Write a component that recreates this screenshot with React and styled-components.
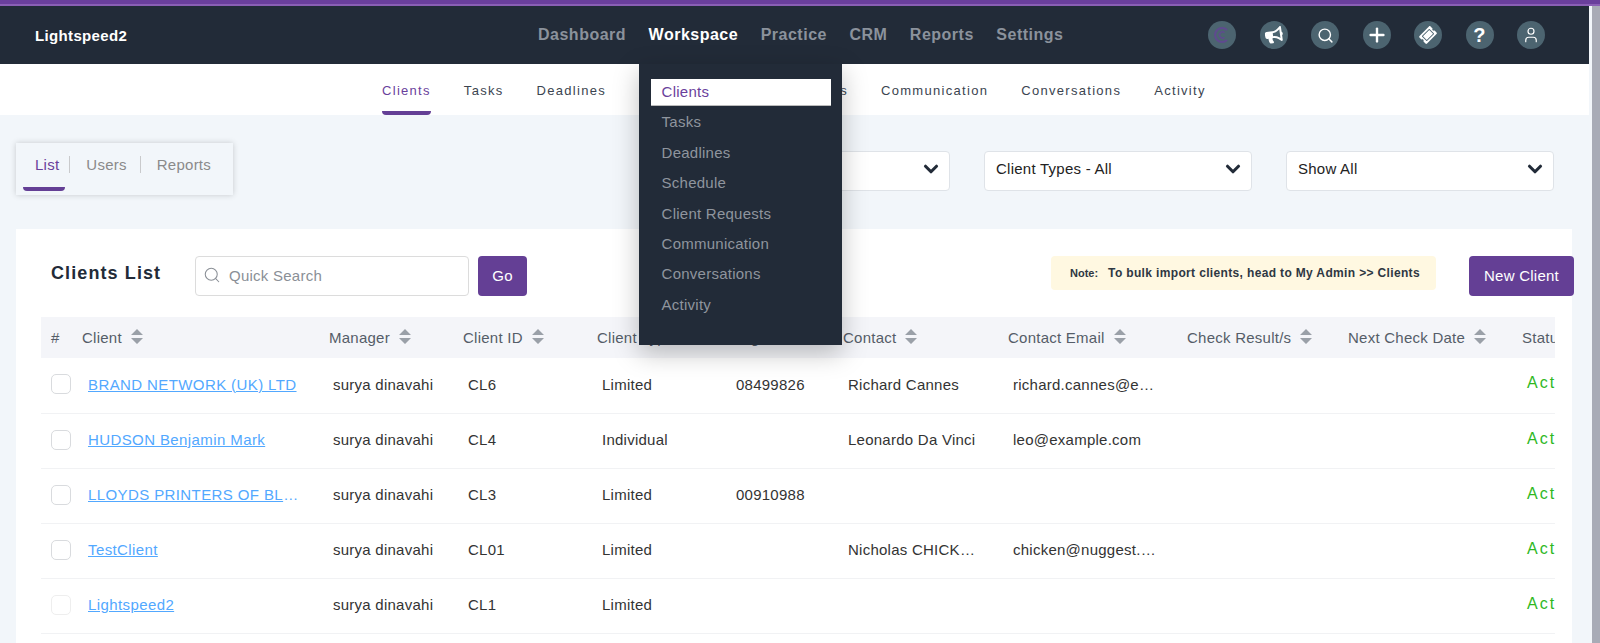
import React from 'react';
import styled, { createGlobalStyle } from 'styled-components';
import { Search, Plus, User, ChevronDown } from 'lucide-react';
import { FaBullhorn, FaTicketAlt } from 'react-icons/fa';

const GlobalStyle = createGlobalStyle`
    html, body {
        margin: 0;
        height: 643px;
        overflow: hidden;
        background: #f2f6fa;
        font-family: "Liberation Sans", Arial, sans-serif;
        letter-spacing: 0.25px;
    }
    * { box-sizing: border-box; }
`;

const Shell = styled.div`
    display: flex;
    height: 637px;
`;

const Page = styled.div`
    width: 1592px;
    flex-shrink: 0;
`;

const Scrollbar = styled.div`
    flex: 1;
    background: #a8abb6;
`;

const TopStripe = styled.div`
    height: 6px;
    width: 1600px;
    background: #6a3f9c;
    border-bottom: 2px solid #8a5fb5;
`;

const Navbar = styled.header`
    display: flex;
    align-items: center;
    height: 58px;
    margin-right: 3px;
    background: #222b38;
    padding-left: 35px;
`;

const Logo = styled.div`
    width: 503px;
    color: #fff;
    font-size: 15px;
    font-weight: 700;
    letter-spacing: 0.35px;
`;

const MainNav = styled.nav`
    display: flex;
    gap: 22.5px;
    height: 100%;
    width: 668px;
`;

const MainNavItem = styled.div`
    position: relative;
    display: flex;
    align-items: center;
    font-size: 16px;
    font-weight: 700;
    letter-spacing: 0.5px;
    color: ${p => (p.$active ? '#fff' : '#8b929c')};
`;

const Dropdown = styled.div`
    position: absolute;
    z-index: 10;
    top: 58px;
    left: -10px;
    width: 203px;
    height: 281px;
    padding: 15px 11px 0 12px;
    background: #222b38;
    box-shadow: 0 8px 24px rgba(0, 0, 0, 0.25);
    font-weight: 400;
    font-size: 15px;
    letter-spacing: 0.25px;
`;

const DropdownItem = styled.div`
    height: 26.5px;
    margin-bottom: 3.9px;
    padding-left: 11px;
    line-height: 25px;
    color: ${p => (p.$active ? '#6a3f9c' : '#8f959e')};
    background: ${p => (p.$active ? '#fff' : 'transparent')};
    border-bottom: ${p => (p.$active ? '1px solid #bbb' : 'none')};
`;

const IconRow = styled.div`
    display: flex;
    gap: 23.5px;
    margin-left: 2px;
`;

const IconCircle = styled.div`
    width: 28px;
    height: 28px;
    border-radius: 50%;
    background: #4c6470;
    color: #fff;
    display: flex;
    align-items: center;
    justify-content: center;
    font-size: 20px;
    font-weight: 700;
`;

const SubNav = styled.div`
    display: flex;
    gap: 33px;
    height: 51px;
    margin-right: 3px;
    padding-left: 382px;
    background: #fff;
`;

const SubNavItem = styled.div`
    position: relative;
    display: flex;
    align-items: center;
    padding-top: 2px;
    font-size: 13px;
    letter-spacing: 1.3px;
    color: ${p => (p.$active ? '#6a3f9c' : '#3b4450')};

    &::after {
        content: '';
        display: ${p => (p.$active ? 'block' : 'none')};
        position: absolute;
        left: 0;
        right: 0;
        bottom: 0;
        height: 4px;
        border-radius: 0 0 4px 4px;
        background: #643f95;
    }
`;

const FilterBar = styled.div`
    display: flex;
    align-items: flex-start;
    height: 114px;
    padding: 28px 38px 0 16px;
`;

const TabCard = styled.div`
    display: flex;
    height: 52px;
    width: 217px;
    padding: 13px 0 0 19px;
    background: #f2f6fa;
    box-shadow: 0 0 6px rgba(0, 0, 0, 0.18);
    margin-right: auto;
`;

const Tab = styled.div`
    position: relative;
    height: 17px;
    padding-right: ${p => (p.$active ? '10px' : '13px')};
    margin-right: 16px;
    font-size: 15px;
    line-height: 17px;
    color: ${p => (p.$active ? '#6a3f9c' : '#8a8a8a')};
    border-right: ${p => (p.$last ? 'none' : '1px solid #c9cacc')};

    &::after {
        content: '';
        display: ${p => (p.$active ? 'block' : 'none')};
        position: absolute;
        left: -12px;
        width: 42px;
        top: 31px;
        height: 4px;
        border-radius: 0 0 4px 4px;
        background: #643f95;
    }
`;

const Select = styled.div`
    display: flex;
    align-items: center;
    justify-content: space-between;
    width: 268px;
    height: 40px;
    margin: 8px 0 0 34px;
    padding: 0 7px 5px 11px;
    background: #fff;
    border: 1px solid #dfe3e8;
    border-radius: 4px;
    font-size: 15px;
    color: #222;
`;

const Card = styled.section`
    margin: 0 20px 0 16px;
    height: 420px;
    padding: 27px 0 0 25px;
    background: #fff;
`;

const CardHeader = styled.div`
    display: flex;
    align-items: flex-start;
    height: 61px;
`;

const Title = styled.h2`
    margin: 7px 34px 0 10px;
    width: 110px;
    font-size: 18px;
    font-weight: 700;
    letter-spacing: 1.1px;
    color: #222b38;
    white-space: nowrap;
`;

const SearchBox = styled.div`
    display: flex;
    align-items: center;
    gap: 8px;
    width: 274px;
    height: 40px;
    padding: 0 0 2px 7px;
    border: 1px solid #dcdcdc;
    border-radius: 4px;
    font-size: 15px;
    color: #8a8f96;
`;

const Button = styled.button`
    height: 40px;
    width: ${p => (p.$wide ? '105px' : '49px')};
    padding: 0 0 2px;
    margin-left: ${p => (p.$wide ? '33px' : '9px')};
    margin-right: ${p => (p.$wide ? '-2px' : '0')};
    background: #643f95;
    color: #fff;
    border: none;
    border-radius: 4px;
    font: 400 15px "Liberation Sans", Arial, sans-serif;
    letter-spacing: 0.25px;
    white-space: nowrap;
`;

const Note = styled.div`
    display: flex;
    align-items: center;
    gap: 10px;
    height: 34px;
    margin-left: auto;
    padding: 0 16px 0 19px;
    background: #fff8e1;
    border-radius: 4px;
    font-size: 12px;
    font-weight: 700;
    letter-spacing: 0.35px;
    color: #2e3742;
`;

const NoteLabel = styled.span`
    font-size: 11px;
    letter-spacing: 0;
`;

const TableClip = styled.div`
    width: 1514px;
    overflow: hidden;
`;

const Table = styled.table`
    table-layout: fixed;
    border-collapse: collapse;
    width: 1671px;
    font-size: 15px;
`;

const HeadRow = styled.tr`
    height: 41px;
    background: #f4f5f9;
`;

const Th = styled.th`
    padding: 0 0 0 10px;
    font-weight: 400;
    text-align: left;
    color: #555d68;
    white-space: nowrap;
`;

const Td = styled.td`
    height: 55px;
    padding: 0 18px 2px 15px;
    color: #333;
    border-bottom: 1px solid #f1f2f4;
    white-space: nowrap;
    overflow: hidden;
    text-overflow: ellipsis;
`;

const ManagerCell = styled(Td)`
    padding: 0 0 2px 14px;
`;

const CheckCell = styled.td`
    padding: 0 0 2px 10px;
    border-bottom: 1px solid #f1f2f4;
`;

const Check = styled.div`
    width: 20px;
    height: 20px;
    border: 1px solid ${p => (p.$faint ? '#eeeeee' : '#d9dbde')};
    border-radius: 5px;
`;

const ClientCell = styled(Td)`
    padding: 0 18px 2px 16px;
    letter-spacing: 0.4px;
    color: #52a8ff;
`;

const ClientLink = styled.a`
    color: #52a8ff;
    text-decoration: underline;
`;

const StatusCell = styled(Td)`
    padding-bottom: 4px;
    font-size: 16px;
    color: #2fb81f;
    letter-spacing: 2px;
    overflow: visible;
    text-overflow: clip;
`;

const Sort = styled.svg`
    margin-left: 9px;
    vertical-align: -1px;
`;

const SortIcon = () => (
    <Sort width="12" height="15" viewBox="0 0 12 15">
        <path d="M6 0 L12 6 H0 Z M0 9 H12 L6 15 Z" fill="#9aa0a8" />
    </Sort>
);

const CoinIcon = () => (
    <svg width="18" height="18" viewBox="0 0 18 18" fill="none" stroke="#5f4a8f" strokeWidth="2">
        <path d="M14 4 A7 7 0 1 0 14 14" />
        <path d="M11.5 6.8 A3 3 0 1 0 11.5 11.2" strokeWidth="1.5" />
    </svg>
);

const subLinks = ['Clients', 'Tasks', 'Deadlines', 'Schedule', 'Client Requests', 'Communication', 'Conversations', 'Activity'];
const mainLinks = ['Dashboard', 'Workspace', 'Practice', 'CRM', 'Reports', 'Settings'];
const columns = ['Client', 'Manager', 'Client ID', 'Client Type', 'Reg No', 'Contact', 'Contact Email', 'Check Result/s', 'Next Check Date', 'Status'];
const widths = [31, 247, 134, 134, 134, 112, 165, 179, 161, 174, 200];

const rows = [
    { name: 'BRAND NETWORK (UK) LTD', id: 'CL6', type: 'Limited', reg: '08499826', contact: 'Richard Cannes', email: 'richard.cannes@example.com' },
    { name: 'HUDSON Benjamin Mark', id: 'CL4', type: 'Individual', reg: '', contact: 'Leonardo Da Vinci', email: 'leo@example.com' },
    { name: 'LLOYDS PRINTERS OF BLACKPOOL LTD', id: 'CL3', type: 'Limited', reg: '00910988', contact: '', email: '' },
    { name: 'TestClient', id: 'CL01', type: 'Limited', reg: '', contact: 'Nicholas CHICKEN', email: 'chicken@nuggest.example' },
    { name: 'Lightspeed2', id: 'CL1', type: 'Limited', reg: '', contact: '', email: '', faint: true },
];

const App = () => (
    <>
        <GlobalStyle />
        <TopStripe />
        <Shell>
            <Page>
                <Navbar>
                    <Logo>Lightspeed2</Logo>
                    <MainNav>
                        {mainLinks.map(link => (
                            <MainNavItem key={link} $active={link === 'Workspace'}>
                                {link}
                                {link === 'Workspace' && (
                                    <Dropdown>
                                        {subLinks.map(sub => (
                                            <DropdownItem key={sub} $active={sub === 'Clients'}>{sub}</DropdownItem>
                                        ))}
                                    </Dropdown>
                                )}
                            </MainNavItem>
                        ))}
                    </MainNav>
                    <IconRow>
                        <IconCircle><CoinIcon /></IconCircle>
                        <IconCircle><FaBullhorn size={18} style={{ transform: 'rotate(-8deg)' }} /></IconCircle>
                        <IconCircle><Search size={17} strokeWidth={2} /></IconCircle>
                        <IconCircle><Plus size={22} strokeWidth={2.6} /></IconCircle>
                        <IconCircle><FaTicketAlt size={16} style={{ transform: 'rotate(-45deg)' }} /></IconCircle>
                        <IconCircle>?</IconCircle>
                        <IconCircle><User size={18} strokeWidth={1.6} /></IconCircle>
                    </IconRow>
                </Navbar>
                <SubNav>
                    {subLinks.map(link => (
                        <SubNavItem key={link} $active={link === 'Clients'}>{link}</SubNavItem>
                    ))}
                </SubNav>
                <FilterBar>
                    <TabCard>
                        <Tab $active>List</Tab>
                        <Tab>Users</Tab>
                        <Tab $last>Reports</Tab>
                    </TabCard>
                    <Select>Managers - All<ChevronDown size={22} strokeWidth={3.4} color="#222b38" /></Select>
                    <Select>Client Types - All<ChevronDown size={22} strokeWidth={3.4} color="#222b38" /></Select>
                    <Select>Show All<ChevronDown size={22} strokeWidth={3.4} color="#222b38" /></Select>
                </FilterBar>
                <Card>
                    <CardHeader>
                        <Title>Clients List</Title>
                        <SearchBox><Search size={18} strokeWidth={1.4} />Quick Search</SearchBox>
                        <Button>Go</Button>
                        <Note><NoteLabel>Note:</NoteLabel><span>To bulk import clients, head to My Admin &gt;&gt; Clients</span></Note>
                        <Button $wide>New Client</Button>
                    </CardHeader>
                    <TableClip>
                        <Table>
                            <colgroup>
                                {widths.map((w, i) => <col key={i} width={w} />)}
                            </colgroup>
                            <thead>
                                <HeadRow>
                                    <Th>#</Th>
                                    {columns.map(col => (
                                        <Th key={col}>{col}{col !== 'Status' && <SortIcon />}</Th>
                                    ))}
                                </HeadRow>
                            </thead>
                            <tbody>
                                {rows.map(row => (
                                    <tr key={row.id}>
                                        <CheckCell><Check $faint={row.faint} /></CheckCell>
                                        <ClientCell><ClientLink href="#">{row.name}</ClientLink></ClientCell>
                                        <ManagerCell>surya dinavahi</ManagerCell>
                                        <Td>{row.id}</Td>
                                        <Td>{row.type}</Td>
                                        <Td>{row.reg}</Td>
                                        <Td>{row.contact}</Td>
                                        <Td>{row.email}</Td>
                                        <Td />
                                        <Td />
                                        <StatusCell>Active</StatusCell>
                                        <Td />
                                    </tr>
                                ))}
                            </tbody>
                        </Table>
                    </TableClip>
                </Card>
            </Page>
            <Scrollbar />
        </Shell>
    </>
);

export default App;
